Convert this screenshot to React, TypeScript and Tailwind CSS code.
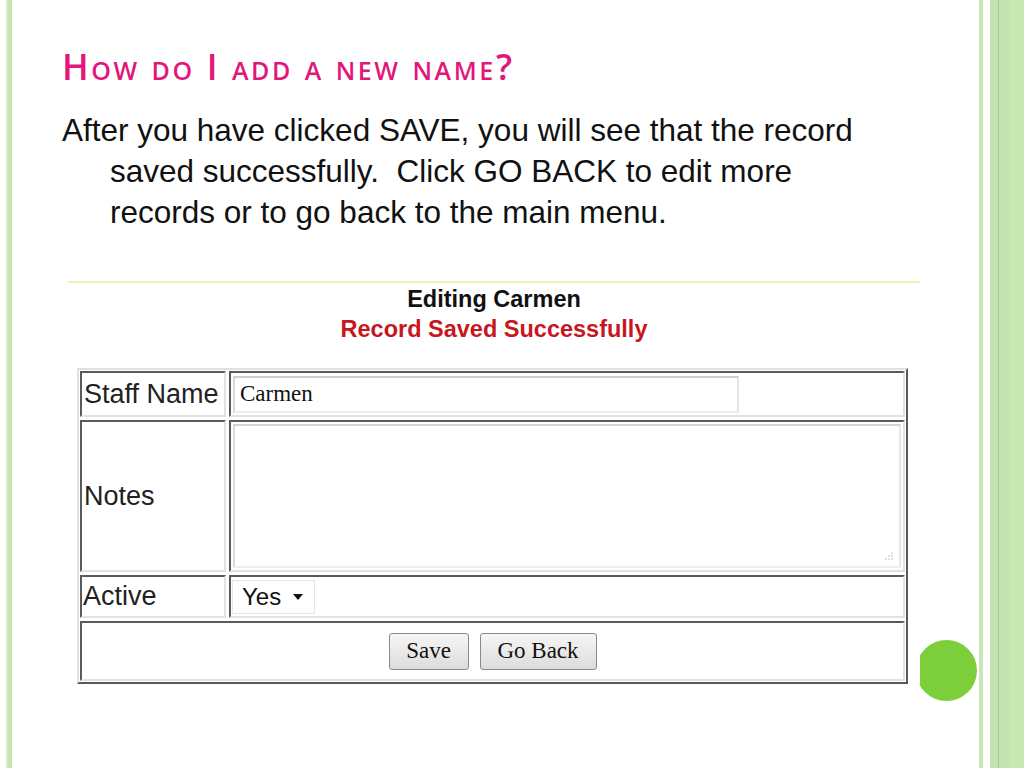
import React from "react";

const cellA = "border-2 border-t-[#5a5a5a] border-l-[#5a5a5a] border-b-[#e2e2e2] border-r-[#e2e2e2]";

export default function App() {
  return (
    <div className="relative flex h-[768px] w-[1024px] overflow-hidden bg-white font-['Liberation_Sans',Arial,sans-serif]">
      {/* left stripe */}
      <div className="flex w-[62px] shrink-0">
        <div className="ml-[6px] w-[2px] bg-[#d5ecc8]" />
        <div className="w-[4px] bg-[#c4e4b0]" />
      </div>

      {/* green dot, under the screenshot */}
      <div className="absolute left-[916px] top-[640px] h-[61px] w-[61px] rounded-full bg-[#7ccf3a]" />

      <main className="relative flex w-[917px] flex-col">
        <h1 className="mt-[44px] font-['Open_Sans',sans-serif] text-[35.5px] font-semibold leading-[44px] tracking-[2.6px] text-[#e2177b] [font-variant:small-caps]">
          How do I add a new name?
        </h1>
        <p className="mt-[22px] w-[805px] pl-[48px] -indent-[48px] text-[31.5px] leading-[41px] text-[#111]">
          After you have clicked SAVE, you will see that the record saved successfully.&nbsp; Click GO BACK to edit more records or to go back to the main menu.
        </p>

        {/* screenshot */}
        <div className="relative z-10 ml-[6px] mt-[48px] w-[852px] bg-white">
          <div className="h-[2px] bg-[#e8f6b4]" />
          <div className="pt-[1px] text-center font-['Liberation_Sans',Arial,sans-serif] font-bold leading-[30px]">
            <div className="text-[23.5px] text-[#111]">Editing Carmen</div>
            <div className="text-[23.5px] text-[#c8161e]">Record Saved Successfully</div>
          </div>

          <div className="ml-[9px] mt-[24px] w-[831px] border-2 border-t-[#e0e0e0] border-l-[#e0e0e0] border-b-[#5a5a5a] border-r-[#5a5a5a] p-[1px]">
            <div className="grid grid-cols-[146px_1fr] gap-[3px] text-[27px] text-[#222]">
              <div className={`${cellA} flex h-[46px] items-center pl-[2px]`}>Staff Name</div>
              <div className={`${cellA} flex h-[46px] items-center pl-[2px]`}>
                <div className="flex h-[37px] w-[506px] items-center border-2 border-t-[#cfcfcf] border-l-[#d8d8d8] border-b-[#eeeeee] border-r-[#e4e4e4] pl-[5px] font-['Liberation_Serif','Times_New_Roman',serif] text-[23px] text-[#111]">
                  Carmen
                </div>
              </div>

              <div className={`${cellA} flex h-[152px] items-center pl-[2px]`}>Notes</div>
              <div className={`${cellA} flex h-[152px] items-center px-[2px]`}>
                <div className="relative h-[144px] w-full border-2 border-t-[#d2d2d2] border-l-[#dadada] border-b-[#eeeeee] border-r-[#e6e6e6]">
                  <svg className="absolute bottom-[6px] right-[6px]" width="8" height="8" viewBox="0 0 8 8">
                    <circle cx="7" cy="1" r="0.7" fill="#aaa" />
                    <circle cx="4" cy="4" r="0.7" fill="#aaa" />
                    <circle cx="7" cy="4" r="0.7" fill="#aaa" />
                    <circle cx="1" cy="7" r="0.7" fill="#aaa" />
                    <circle cx="4" cy="7" r="0.7" fill="#aaa" />
                    <circle cx="7" cy="7" r="0.7" fill="#aaa" />
                  </svg>
                </div>
              </div>

              <div className={`${cellA} flex h-[43px] items-center pl-[1px]`}>Active</div>
              <div className={`${cellA} flex h-[43px] items-center pl-[1px]`}>
                <div className="flex h-[34px] w-[83px] items-center gap-[12px] border border-[#e6e6e6] pl-[9px] text-[24px] text-[#111]">
                  Yes
                  <svg width="10" height="6" viewBox="0 0 10 6">
                    <path d="M0 0 L10 0 L5 6 Z" fill="#111" />
                  </svg>
                </div>
              </div>

              <div className={`${cellA} col-span-2 flex h-[60px] items-center justify-center gap-[11px]`}>
                <button className="h-[37px] w-[80px] rounded-[3px] border border-[#8a8a8a] bg-gradient-to-b from-[#f6f6f6] to-[#dcdcdc] font-['Liberation_Serif','Times_New_Roman',serif] text-[23px] text-[#111]">
                  Save
                </button>
                <button className="h-[37px] w-[117px] rounded-[3px] border border-[#8a8a8a] bg-gradient-to-b from-[#f6f6f6] to-[#dcdcdc] font-['Liberation_Serif','Times_New_Roman',serif] text-[23px] text-[#111]">
                  Go Back
                </button>
              </div>
            </div>
          </div>
        </div>
      </main>

      {/* right stripes */}
      <div className="flex flex-1">
        <div className="w-[4px] bg-[#c8e6b6]" />
        <div className="w-[7px] bg-white" />
        <div className="w-[8px] bg-[#c6e4b2]" />
        <div className="w-[1px] bg-[#9fcf86]" />
        <div className="w-[10px] bg-[#c6e4b2]" />
        <div className="flex-1 bg-[#c8e8b4]" />
      </div>
    </div>
  );
}
